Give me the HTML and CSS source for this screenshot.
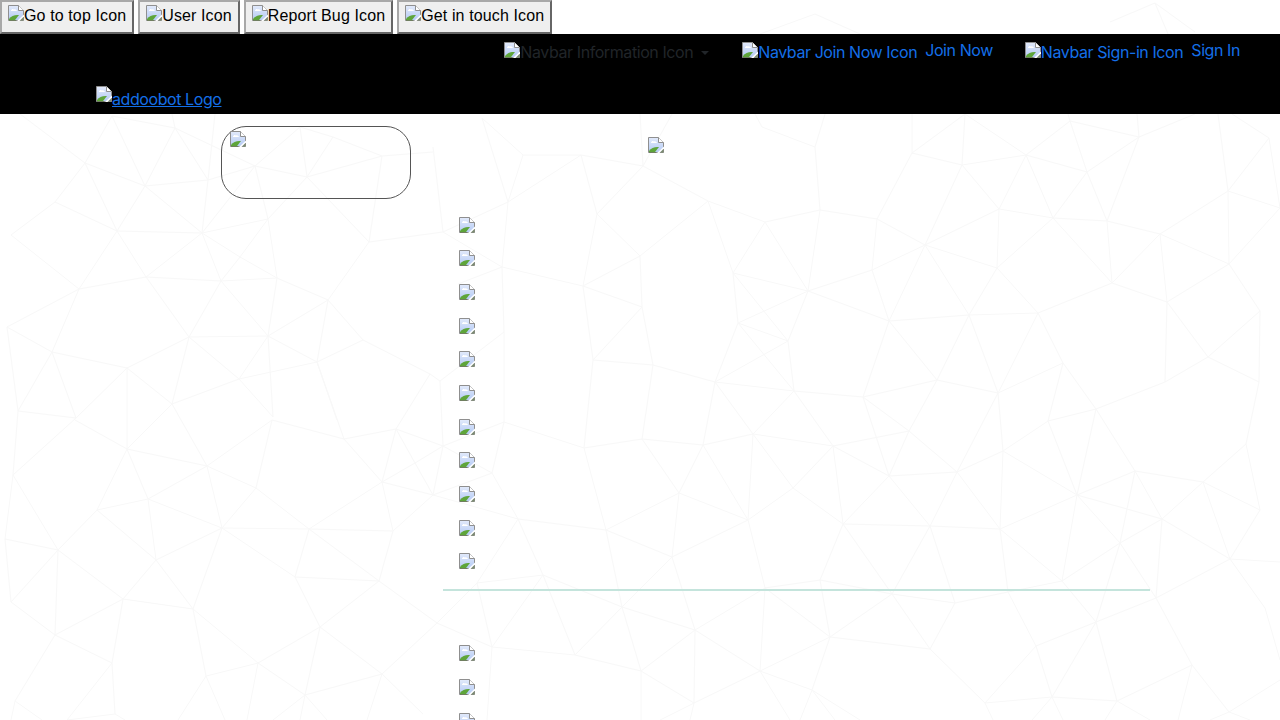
FILE: index.html
```html
<!DOCTYPE html>
<html lang="en">
<head>
<meta charset="utf-8">
<title>addoobot</title>
<link rel="stylesheet" href="styles.css">
</head>
<body>
<svg class="defs" width="0" height="0" aria-hidden="true">
  <defs>
    <linearGradient id="sky" x1="0" y1="0" x2="0" y2="1">
      <stop offset="0" stop-color="#e2eafb"/>
      <stop offset="1" stop-color="#b4caf4"/>
    </linearGradient>
    <symbol id="broken" viewBox="0 0 16 16">
      <path d="M.5.5H10.500L15.500 5.500V15.500H.5Z" fill="url(#sky)" stroke="#8f8f8f"/>
      <path d="M10.500.5V5.500H15.500" fill="#fff" stroke="#8f8f8f"/>
      <path d="M3 5.500C3.500 4 5 3.500 6 4.500C7.500 4 8.500 5 9 6H3Z" fill="#fff"/>
      <path d="M1 15V14C3 11 7 9.500 11 10L7 15Z" fill="#5ea53a"/>
      <path d="M1 15H8V16H1Z" fill="#6f7f5f"/>
      <path d="M16 9.500L9 16H11.500L16 11.500Z" fill="#fff"/>
      <path d="M12 15.500L15.500 12V15.500Z" fill="#7b8a6d"/>
    </symbol>
  </defs>
</svg>

<svg class="mesh" viewBox="0 0 1280 720" aria-hidden="true">
  <path d="M1155 3L1110 22M1155 3L1195 32M1155 3L1168 34M815 14L760 34M815 14L860 34
  M112 116L175 128M112 116L85 163M112 116L145 186M20 114L85 163M175 128L145 186M175 128L208 180M172 114L175 128M175 128L255 166M85 163L145 186M85 163L55 202M85 163L117 231M145 186L208 180M145 186L117 231M145 186L202 233M208 180L255 166M208 180L202 233M215 114L208 180M255 166L307 177M255 166L268 219M255 166L202 233M307 177L300 127M307 177L382 156M307 177L333 137M307 177L369 242M307 177L268 219M300 127L333 137M300 127L255 166M333 137L382 156M382 156L369 242M382 156L433 152M55 202L11 235M55 202L117 231M11 235L79 289M117 231L79 289M117 231L146 277M117 231L202 233M202 233L146 277M202 233L268 219M202 233L240 257M202 233L221 281M268 219L240 257M268 219L277 278M240 257L277 278M240 257L221 281M79 289L146 277M79 289L7 327M79 289L52 352M146 277L221 281M146 277L189 337M221 281L277 278M221 281L189 337M221 281L268 336M277 278L268 336M277 278L328 300M328 300L369 242M328 300L268 336M328 300L363 340M328 300L317 362M268 336L189 337M268 336L317 362M268 336L273 417M268 336L239 379M317 362L239 379M317 362L363 340M317 362L337 420M363 340L430 374M7 327L52 352M7 327L18 411M52 352L127 368M52 352L18 411M52 352L76 418M127 368L189 337M127 368L76 418M127 368L172 404M127 368L127 449M189 337L172 404M189 337L239 379M172 404L239 379M239 379L273 417M76 418L18 411M369 242L443 232
  M127 449L207 466M207 466L256 488M272 420L207 466M272 420L256 488M127 449L75 420M127 449L172 404M207 466L172 404M127 449L148 499M127 449L97 510M207 466L148 499M207 466L222 528M256 488L222 528M256 488L309 529M148 499L97 510M148 499L156 560M148 499L222 528M97 510L156 560M97 510L58 550M13 475L18 411M13 475L76 418M13 475L5 539M13 475L58 550M5 539L58 550M5 539L11 602M58 550L11 602M58 550L55 635M58 550L123 599M156 560L222 528M156 560L123 599M156 560L193 609M123 599L55 635M123 599L193 609M123 599L112 663M55 635L112 663M55 635L11 602M55 635L15 701M112 663L115 714M112 663L67 720M15 701L11 720M15 701L42 720M115 714L67 720M115 714L125 720M193 609L222 528M193 609L258 663M193 609L206 676M258 663L206 676M258 663L320 627M258 663L305 695M258 663L247 720M206 676L178 720M206 676L225 720M305 695L320 627M305 695L382 674M305 695L273 720M305 695L300 720M305 695L327 720M382 674L320 627M382 674L367 720M382 674L423 714M382 674L437 623M222 528L309 529M222 528L295 577M309 529L295 577M309 529L393 531M309 529L379 581M309 529L382 482M295 577L379 581M295 577L320 627M379 581L393 531M379 581L320 627M379 581L437 623M393 531L382 482M393 531L433 495M382 482L415 463M382 482L433 495M382 482L344 439M382 482L396 429M396 429L344 439M396 429L415 463M415 463L433 495M415 463L443 446M344 439L272 420M344 439L317 362M396 429L430 374M396 429L443 446M430 374L440 381
  M482 118L523 155M482 118L508 202M523 155L581 155M523 155L508 202M581 155L643 166M581 155L597 214M581 155L508 202M643 166L597 214M643 166L708 201M643 166L640 114M643 166L672 114M508 202L443 232M508 202L502 267M597 214L640 256M597 214L583 286M640 256L708 201M640 256L583 286M640 256L642 307M708 201L765 222M708 201L733 273M765 222L820 210M765 222L733 273M765 222L808 291M820 210L808 291M820 210L815 147M820 210L877 219M815 147L762 127M815 147L825 114M762 127L755 114M443 232L502 267M433 147L443 232M502 267L583 286M502 267L458 284M502 267L504 332M583 286L642 307M583 286L593 360M642 307L593 360M642 307L653 365M733 273L808 291M733 273L738 323M733 273L788 341M808 291L738 323M808 291L788 341M808 291L872 270M808 291L889 321M738 323L788 341M738 323L715 382M738 323L794 391M788 341L715 382M788 341L794 391M593 360L653 365M593 360L584 448M653 365L715 382M653 365L642 439M715 382L794 391M715 382L703 445M715 382L753 434M794 391L863 397M794 391L753 434M794 391L833 446M504 332L504 422M504 332L440 381M440 381L443 446
  M912 153L962 165M912 153L912 114M912 153L877 219M912 153L965 114M962 165L1026 155M962 165L965 114M962 165L925 245M962 165L999 209M1026 155L1070 121M1026 155L1087 172M1026 155L999 209M1026 155L1053 218M1026 155L965 114M1070 121L1139 137M1070 121L1068 114M1070 121L1087 172M1139 137L1087 172M1139 137L1137 114M1139 137L1195 114M1139 137L1107 221M1087 172L1053 218M1087 172L1107 221M999 209L1053 218M999 209L925 245M999 209L997 268M1053 218L1107 221M1053 218L997 268M1053 218L1112 283M1107 221L1160 234M1107 221L1112 283M1160 234L1228 191M1160 234L1167 302M1160 234L1112 283M1160 234L1229 264M1228 191L1269 138M1228 191L1218 114M1228 191L1229 264M1228 191L1280 208M1269 138L1232 114M1269 138L1280 208M877 219L925 245M877 219L872 270M925 245L872 270M925 245L997 268M925 245L889 321M925 245L969 315M997 268L969 315M997 268L1038 313M872 270L889 321M889 321L969 315M889 321L937 380M889 321L863 397M969 315L1038 313M969 315L937 380M969 315L998 393M1038 313L1112 283M1038 313L998 393M1038 313L1063 363M1112 283L1167 302M1167 302L1229 264M1167 302L1208 357M1167 302L1165 382M1229 264L1260 311M1229 264L1280 208M1260 311L1208 357M1260 311L1259 382M1208 357L1165 382M1208 357L1259 382M1165 382L1096 409M1259 382L1246 444M937 380L863 397M937 380L998 393M937 380L909 431M998 393L1063 363M998 393L957 472M998 393L1003 451M1063 363L1096 409M1063 363L1048 421M1096 409L1048 421M1096 409L1077 495M1096 409L1135 471M863 397L909 431M863 397L889 476
  M909 431L889 476M909 431L957 472M909 431L833 446M889 476L957 472M889 476L930 526M889 476L833 446M889 476L843 524M957 472L1003 451M957 472L930 526M957 472L1000 529M1003 451L1048 421M1003 451L1077 495M1003 451L1000 529M1048 421L1077 495M1077 495L1135 471M1077 495L1127 509M1077 495L1120 543M1077 495L1000 529M1077 495L1062 581M1135 471L1203 482M1135 471L1162 519M1135 471L1127 509M1203 482L1260 510M1203 482L1162 519M1203 482L1246 444M1203 482L1230 559M1260 510L1246 444M1260 510L1230 559M1162 519L1127 509M1162 519L1120 543M1162 519L1230 559M1162 519L1156 598M1127 509L1120 543M1120 543L1062 581M1120 543L1096 622M1120 543L1156 598M1230 559L1280 562M1230 559L1265 608M1265 608L1280 660M1230 559L1156 598M1000 529L930 526M1000 529L1062 581M1000 529L1008 592M930 526L843 524M930 526L892 594M930 526L955 603M1062 581L1008 592M1062 581L1096 622M955 603L892 594M955 603L1008 592M955 603L930 649M892 594L930 649M892 594L830 637M892 594L820 580M892 594L843 524M1008 592L1036 646M1096 622L1156 598M1096 622L1036 646M1096 622L1052 697M1096 622L1117 701M1156 598L1192 665M1036 646L1052 697M1036 646L985 703M930 649L985 703M985 703L1052 697M985 703L993 720M1052 697L1117 701M1052 697L1032 720M1052 697L1063 720M1117 701L1192 665M1117 701L1105 720M1117 701L1150 720M1192 665L1229 712M1192 665L1178 720M1229 712L1280 680M1229 712L1210 720M1229 712L1250 720M930 649L830 637
  M504 422L584 448M504 422L443 446M504 422L492 473M584 448L642 439M584 448L606 530M642 439L703 445M642 439L679 493M703 445L753 434M703 445L679 493M703 445L748 520M753 434L833 446M753 434L793 488M753 434L748 520M833 446L793 488M833 446L843 524M443 446L492 473M443 446L433 495M492 473L433 495M492 473L518 519M433 495L518 519M518 519L606 530M518 519L543 575M518 519L477 583M606 530L679 493M606 530L672 557M606 530L622 607M679 493L748 520M679 493L672 557M748 520L793 488M748 520L672 557M748 520L765 588M793 488L843 524M843 524L820 580M672 557L622 607M672 557L695 630M543 575L477 583M543 575L622 607M543 575L492 647M543 575L575 655M477 583L492 647M477 583L437 623M820 580L765 588M820 580L830 637M765 588L695 630M765 588L830 637M765 588L760 671M622 607L695 630M622 607L575 655M622 607L641 671M695 630L641 671M695 630L760 671M695 630L694 703M830 637L760 671M830 637L812 690M492 647L575 655M492 647L487 720M575 655L641 671M641 671L694 703M641 671L641 720M760 671L694 703M760 671L812 690M760 671L790 720M694 703L690 720M694 703L660 720M812 690L800 720M812 690L860 720M812 690L835 720M437 623L492 647"/>
</svg>

<div class="toolbar">
  <button class="tool" type="button"><svg class="bi"><use href="#broken"/></svg>Go to top Icon</button>
  <button class="tool" type="button"><svg class="bi"><use href="#broken"/></svg>User Icon</button>
  <button class="tool" type="button"><svg class="bi"><use href="#broken"/></svg>Report Bug Icon</button>
  <button class="tool" type="button"><svg class="bi"><use href="#broken"/></svg>Get in touch Icon</button>
</div>

<nav class="navbar">
  <ul class="nav-links">
    <li class="nav-item nav-info">
      <span class="alt"><svg class="bi"><use href="#broken"/></svg>Navbar Information Icon</span><span class="caret"></span>
    </li>
    <li class="nav-item">
      <a class="alt link" href="#"><svg class="bi"><use href="#broken"/></svg>Navbar Join Now Icon</a><a class="label" href="#">Join Now</a>
    </li>
    <li class="nav-item">
      <a class="alt link" href="#"><svg class="bi"><use href="#broken"/></svg>Navbar Sign-in Icon</a><a class="label" href="#">Sign In</a>
    </li>
  </ul>
  <div class="brand"><svg class="bi"><use href="#broken"/></svg><a href="#">addoobot Logo</a></div>
</nav>

<main class="content">
  <aside class="avatar"><svg class="bi"><use href="#broken"/></svg></aside>
  <section class="panel">
    <div class="panel-head"><svg class="bi"><use href="#broken"/></svg></div>
    <ul class="list list-a">
      <li><svg class="bi"><use href="#broken"/></svg></li>
      <li><svg class="bi"><use href="#broken"/></svg></li>
      <li><svg class="bi"><use href="#broken"/></svg></li>
      <li><svg class="bi"><use href="#broken"/></svg></li>
      <li><svg class="bi"><use href="#broken"/></svg></li>
      <li><svg class="bi"><use href="#broken"/></svg></li>
      <li><svg class="bi"><use href="#broken"/></svg></li>
      <li><svg class="bi"><use href="#broken"/></svg></li>
      <li><svg class="bi"><use href="#broken"/></svg></li>
      <li><svg class="bi"><use href="#broken"/></svg></li>
      <li><svg class="bi"><use href="#broken"/></svg></li>
    </ul>
    <hr class="rule">
    <ul class="list list-b">
      <li><svg class="bi"><use href="#broken"/></svg></li>
      <li><svg class="bi"><use href="#broken"/></svg></li>
      <li><svg class="bi"><use href="#broken"/></svg></li>
    </ul>
  </section>
</main>
</body>
</html>
```
FILE: styles.css
```css
* { box-sizing: border-box; }
html, body { margin: 0; height: 720px; overflow: hidden; background: #fff; }
body { position: relative; font-family: "Inter", "Liberation Sans", sans-serif; font-size: 16px; line-height: 24px; letter-spacing: -0.42px; color: #212529; }
.defs { position: absolute; }
.mesh { position: absolute; left: 0; top: 0; width: 1280px; height: 720px; z-index: 0; fill: none; stroke: #f8f8f8; stroke-width: 1; }
.bi { width: 16px; height: 16px; display: block; flex: none; }

.toolbar { position: relative; z-index: 1; display: flex; gap: 4px; height: 34px; }
.tool { display: flex; align-items: flex-start; height: 34px; padding: 2px 6px 0; margin: 0; font: 16px/24px "Liberation Sans", Arial, sans-serif; letter-spacing: 0.12px; color: #000; background: #efefef; border: 2px solid; border-color: #a8a8a8 #666 #666 #a8a8a8; white-space: nowrap; }
.tool .bi { margin-top: 1px; }

.navbar { position: relative; z-index: 1; height: 80px; background: #000; }
.nav-links { display: flex; justify-content: flex-end; margin: 0; padding: 4px 24px 0 0; list-style: none; height: 52px; }
.nav-item { display: flex; align-items: flex-start; padding: 0 16px; }
.alt { display: flex; padding-top: 2px; line-height: 24px; }
.alt .bi { margin-top: 2px; }
.link { color: #146fe8; text-decoration: none; }
.label { color: #146fe8; text-decoration: none; margin-left: 8px; }
.nav-info { color: #212529; padding-right: 17px; }
.caret { width: 0; height: 0; margin: 13px 0 0 8px; border-top: 4.8px solid #212529; border-left: 4.8px solid transparent; border-right: 4.8px solid transparent; }
.brand { display: flex; align-items: flex-start; padding-left: 96px; }
.brand a { color: #146fe8; text-decoration: underline; padding-top: 1px; }

.content { position: relative; z-index: 1; display: flex; align-items: flex-start; padding: 12px 0 0 221px; }
.avatar { width: 190px; height: 73px; padding: 4px 8px; border: 1px solid #555; border-radius: 25px; flex: none; }
.panel { width: 707px; margin-left: 32px; flex: none; }
.panel-head { padding: 11px 0 0 205px; height: 90.500px; }
.list { margin: 0; padding: 0 0 0 16px; list-style: none; }
.list-a li { height: 33.700px; }
.list-b li { height: 34px; }
.rule { height: 2px; margin: 1.500px 0 54px; border: 0; background: #c4e4dc; }
```
